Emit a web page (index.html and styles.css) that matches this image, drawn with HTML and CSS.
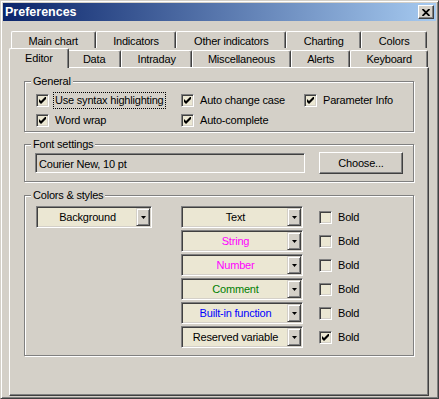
FILE: index.html
```html
<!DOCTYPE html>
<html lang="en">
<head>
    <meta charset="UTF-8">
    <title>Preferences</title>
    <link rel="stylesheet" href="styles.css">
</head>
<body>
    <div class="window">
        <div class="titlebar">
            <span class="title">Preferences</span>
            <span class="close">
                <svg width="8" height="7" viewBox="0 0 8 7"><path d="M0.5 0 L7.5 7 M7.5 0 L0.5 7" stroke="#000" stroke-width="1.8"/></svg>
            </span>
        </div>

        <div class="tabs">
            <div class="tabrow back">
                <div class="tab">Main chart</div>
                <div class="tab">Indicators</div>
                <div class="tab">Other indicators</div>
                <div class="tab">Charting</div>
                <div class="tab">Colors</div>
            </div>
            <div class="tabrow front">
                <div class="tab active">Editor</div>
                <div class="tab">Data</div>
                <div class="tab">Intraday</div>
                <div class="tab">Miscellaneous</div>
                <div class="tab">Alerts</div>
                <div class="tab">Keyboard</div>
            </div>
        </div>

        <div class="panel">
            <div class="group general">
                <span class="legend">General</span>
                <div class="checks">
                    <label class="check"><span class="box checked"></span><span class="caption focused">Use syntax highlighting</span></label>
                    <label class="check"><span class="box checked"></span><span class="caption">Auto change case</span></label>
                    <label class="check"><span class="box checked"></span><span class="caption">Parameter Info</span></label>
                    <label class="check"><span class="box checked"></span><span class="caption">Word wrap</span></label>
                    <label class="check"><span class="box checked"></span><span class="caption">Auto-complete</span></label>
                </div>
            </div>

            <div class="group font">
                <span class="legend">Font settings</span>
                <div class="font-row">
                    <div class="field">Courier New, 10 pt</div>
                    <div class="button">Choose...</div>
                </div>
            </div>

            <div class="group colors">
                <span class="legend">Colors &amp; styles</span>
                <div class="colors-body">
                    <div class="combo bg-combo"><span class="combo-text">Background</span><span class="arrow"></span></div>
                    <div class="style-list">
                        <div class="style-row">
                            <div class="combo"><span class="combo-text">Text</span><span class="arrow"></span></div>
                            <label class="check"><span class="box"></span><span class="caption">Bold</span></label>
                        </div>
                        <div class="style-row">
                            <div class="combo"><span class="combo-text c-string">String</span><span class="arrow"></span></div>
                            <label class="check"><span class="box"></span><span class="caption">Bold</span></label>
                        </div>
                        <div class="style-row">
                            <div class="combo"><span class="combo-text c-number">Number</span><span class="arrow"></span></div>
                            <label class="check"><span class="box"></span><span class="caption">Bold</span></label>
                        </div>
                        <div class="style-row">
                            <div class="combo"><span class="combo-text c-comment">Comment</span><span class="arrow"></span></div>
                            <label class="check"><span class="box"></span><span class="caption">Bold</span></label>
                        </div>
                        <div class="style-row">
                            <div class="combo"><span class="combo-text c-builtin">Built-in function</span><span class="arrow"></span></div>
                            <label class="check"><span class="box"></span><span class="caption">Bold</span></label>
                        </div>
                        <div class="style-row">
                            <div class="combo"><span class="combo-text">Reserved variable</span><span class="arrow"></span></div>
                            <label class="check"><span class="box checked"></span><span class="caption">Bold</span></label>
                        </div>
                    </div>
                </div>
            </div>
        </div>
    </div>
</body>
</html>
```

FILE: styles.css
```css
html, body {
    margin: 0;
    padding: 0;
    overflow: hidden;
}
body {
    font-family: "Liberation Sans", Arial, sans-serif;
    font-size: 11px;
    letter-spacing: -0.2px;
    color: #000;
    background-color: #d4d0c8;
}
.window {
    box-sizing: border-box;
    width: 439px;
    height: 399px;
    display: flex;
    flex-direction: column;
    padding: 2px;
    background-color: #d4d0c8;
    border: 1px solid;
    border-color: #d4d0c8 #404040 #404040 #d4d0c8;
    box-shadow: inset 1px 1px #fff, inset -1px -1px #808080;
}

/* title bar */
.titlebar {
    height: 18px;
    flex: none;
    display: flex;
    align-items: center;
    justify-content: space-between;
    padding-left: 2px;
    background: linear-gradient(to right, #0a246a, #a6caf0);
}
.title {
    color: #fff;
    font-weight: bold;
    font-size: 12.5px;
    letter-spacing: 0;
}
.close {
    box-sizing: border-box;
    width: 16px;
    height: 14px;
    margin-right: 2px;
    display: flex;
    align-items: center;
    justify-content: center;
    background-color: #d4d0c8;
    border: 1px solid;
    border-color: #fff #404040 #404040 #fff;
    box-shadow: inset -1px -1px #808080;
}

/* tabs */
.tabs {
    margin: 10px 7px 0 6px;
    padding: 0 1px 0 2px;
    flex: none;
}
.tabrow {
    display: flex;
}
.tabrow.back {
    height: 17px;
    padding-right: 1px;
}
.tabrow.front {
    height: 19px;
    align-items: flex-end;
}
.tab {
    box-sizing: border-box;
    flex: 1 1 auto;
    padding: 2px 6px 0;
    line-height: 14px;
    text-align: center;
    white-space: nowrap;
    border: 1px solid;
    border-bottom: none;
    border-color: #fff #404040 #fff #fff;
    border-radius: 2px 2px 0 0;
    box-shadow: inset -1px 0 #808080;
    background-color: #d4d0c8;
}
.front .tab {
    height: 17px;
    padding-top: 1px;
}
.front .tab.active {
    height: 20px;
    padding-top: 2px;
    margin: 0 -2px -1px;
    position: relative;
    z-index: 1;
}

/* panel */
.panel {
    flex: 1;
    margin: 0 7px 0 6px;
    padding: 13px 13px 0 14px;
    border: 1px solid;
    border-color: #fff #404040 #404040 #fff;
    box-shadow: inset -1px -1px #808080;
}
.group {
    position: relative;
    border: 1px solid #808080;
    box-shadow: 1px 1px #fff, inset 1px 1px #fff;
    margin-right: 1px;
}
.legend {
    position: absolute;
    top: -8px;
    left: 6px;
    padding: 0 2px;
    line-height: 14px;
    background-color: #d4d0c8;
}
.general {
    padding: 8px 0 1px 11px;
}
.font {
    margin-top: 12px;
    padding: 7px 0 7px 10px;
}
.colors {
    margin-top: 13px;
    padding: 10px 0 7px 11px;
}

/* checkboxes */
.checks {
    display: grid;
    grid-template-columns: 145px 123px auto;
}
.check {
    display: flex;
    align-items: center;
    height: 20px;
}
.box {
    box-sizing: border-box;
    width: 13px;
    height: 13px;
    flex: none;
    background-color: #ebe7d3;
    border: 1px solid;
    border-color: #808080 #fff #fff #808080;
    box-shadow: inset 1px 1px #404040, inset -1px -1px #d4d0c8;
}
.box.checked {
    background-image: url("data:image/svg+xml;utf8,<svg xmlns='http://www.w3.org/2000/svg' width='7' height='7' viewBox='0 0 7 7'><polygon points='0,2 2,4 7,-1 7,2 2,7 0,5' fill='black'/></svg>");
    background-repeat: no-repeat;
    background-position: 2px 2px;
}
.caption {
    margin-left: 4px;
    padding: 1px;
    line-height: 13px;
    border: 1px dotted transparent;
    white-space: nowrap;
}
.caption.focused {
    border-color: #000;
}

/* font settings */
.font-row {
    display: flex;
    align-items: center;
    height: 22px;
}
.field {
    box-sizing: border-box;
    width: 270px;
    height: 20px;
    padding: 3px 3px 0;
    line-height: 14px;
    border: 1px solid;
    border-color: #808080 #fff #fff #808080;
    box-shadow: inset 1px 1px #404040, inset -1px -1px #d4d0c8;
}
.button {
    box-sizing: border-box;
    width: 84px;
    height: 22px;
    margin-left: 14px;
    line-height: 20px;
    text-align: center;
    border: 1px solid;
    border-color: #fff #404040 #404040 #fff;
    box-shadow: inset -1px -1px #808080;
}

/* colors & styles */
.colors-body {
    display: flex;
    align-items: flex-start;
}
.style-list {
    display: flex;
    flex-direction: column;
    gap: 2px;
}
.style-row {
    display: flex;
    align-items: center;
}
.style-row .check {
    margin-left: 16px;
}
.combo {
    box-sizing: border-box;
    width: 122px;
    height: 22px;
    display: flex;
    padding: 2px;
    background-color: #ebe7d3;
    border: 1px solid;
    border-color: #808080 #fff #fff #808080;
    box-shadow: inset 1px 1px #404040, inset -1px -1px #d4d0c8;
}
.bg-combo {
    width: 116px;
    margin-right: 29px;
}
.combo-text {
    flex: 1;
    text-align: center;
    line-height: 17px;
    white-space: nowrap;
}
.arrow {
    box-sizing: border-box;
    width: 14px;
    flex: none;
    margin: -1px -1px -1px 0;
    background-color: #d4d0c8;
    border: 1px solid;
    border-color: #d4d0c8 #404040 #404040 #d4d0c8;
    box-shadow: inset 1px 1px #fff, inset -1px -1px #808080;
    background-image: url("data:image/svg+xml;utf8,<svg xmlns='http://www.w3.org/2000/svg' width='5' height='3' viewBox='0 0 5 3'><polygon points='0,0 5,0 2.5,3' fill='black'/></svg>");
    background-repeat: no-repeat;
    background-position: center;
}
.c-string, .c-number {
    color: #ff00ff;
}
.c-comment {
    color: #008000;
}
.c-builtin {
    color: #0000ff;
}
```
